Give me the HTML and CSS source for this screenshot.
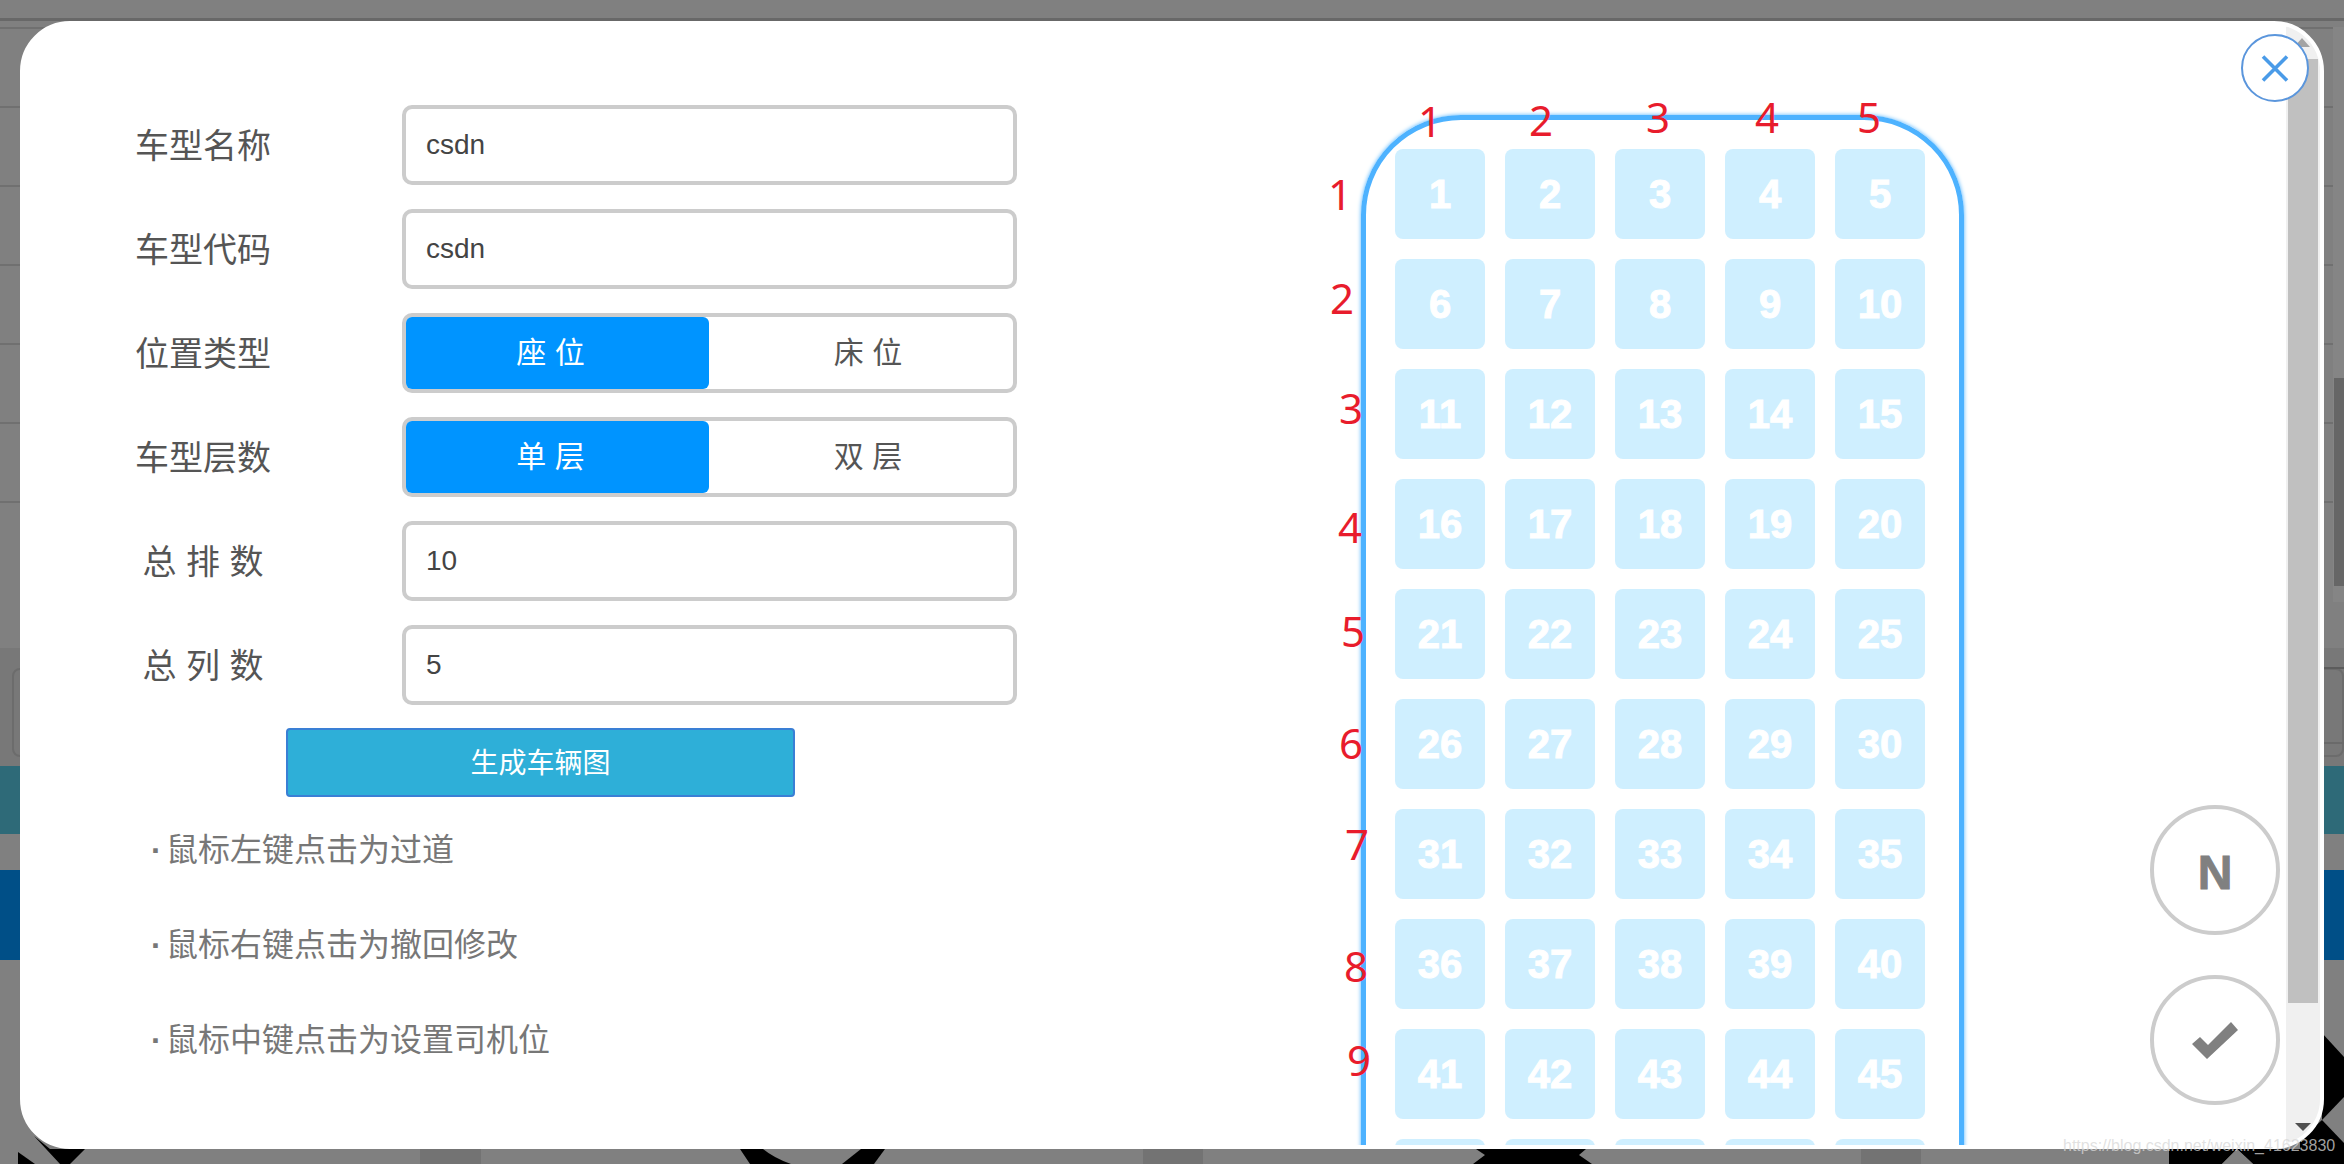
FILE: index.html
```html
<!DOCTYPE html>
<html>
<head>
<title>车型设置</title>
<link rel="stylesheet" href="styles.css">
</head>
<body>

<!-- page behind the dialog -->
<div class="page">
    <div class="top-bar"></div>
    <div class="top-row"></div>
    <div class="table-row"></div>
    <div class="table-row"></div>
    <div class="table-row"></div>
    <div class="table-row"></div>
    <div class="table-row"></div>
    <div class="table-row"></div>
    <div class="page-gap"></div>
    <div class="filter-bar"><div class="filter-input"></div></div>
    <div class="teal-band"></div>
    <div class="blue-band"></div>

    <svg class="page-shapes" width="2344" height="1164" viewBox="0 0 2344 1164">
        <rect x="2333" y="27" width="11" height="575" fill="#858585"/>
        <rect x="2334" y="378" width="10" height="208" fill="#666666"/>
        <rect x="2324" y="667" width="20" height="2" fill="#5c5c5c"/>
        <rect x="2324" y="742" width="20" height="2" fill="#6a6a6a"/>
        <rect x="420" y="1149" width="61" height="15" fill="#737373"/>
        <rect x="1143" y="1149" width="60" height="15" fill="#737373"/>
        <rect x="1861" y="1149" width="60" height="15" fill="#737373"/>
        <polygon points="18,1152 35,1164 18,1164" fill="#000"/>
        <polygon points="34,1136 60,1164 70,1164 85,1149 50,1149" fill="#000"/>
        <path d="M740 1149 L763 1149 Q774 1158 791 1164 L750 1164Z" fill="#000"/>
        <path d="M861 1149 L885 1149 L874 1164 L842 1164Z" fill="#000"/>
        <polygon points="1476,1149 1586,1149 1579,1155 1592,1164 1473,1164 1485,1155" fill="#000"/>
        <polygon points="2169,1149 2237,1149 2222,1164 2169,1164" fill="#000"/>
        <polygon points="2237,1149 2344,1149 2344,1164 2253,1164" fill="#000"/>
        <polygon points="2237,1149 2253,1164 2222,1164" fill="#808080"/>
        <polygon points="2322,1033 2344,1057 2344,1097 2322,1120" fill="#000"/>
        <polygon points="2322,1120 2344,1143 2344,1164 2300,1164 2300,1140" fill="#000"/>
    </svg>
</div>

<!-- dialog -->
<div class="modal">
    <div class="modal-body">

        <div class="form-col">
            <div class="form-row">
                <label class="form-label">车型名称</label>
                <div class="text-box">csdn</div>
            </div>
            <div class="form-row">
                <label class="form-label">车型代码</label>
                <div class="text-box">csdn</div>
            </div>
            <div class="form-row">
                <label class="form-label">位置类型</label>
                <div class="switch">
                    <div class="switch-item switch-on">座 位</div>
                    <div class="switch-item">床 位</div>
                </div>
            </div>
            <div class="form-row">
                <label class="form-label">车型层数</label>
                <div class="switch">
                    <div class="switch-item switch-on">单 层</div>
                    <div class="switch-item">双 层</div>
                </div>
            </div>
            <div class="form-row">
                <label class="form-label">总 排 数</label>
                <div class="text-box">10</div>
            </div>
            <div class="form-row">
                <label class="form-label">总 列 数</label>
                <div class="text-box">5</div>
            </div>

            <button class="make-button">生成车辆图</button>

            <ul class="hints">
                <li>鼠标左键点击为过道</li>
                <li>鼠标右键点击为撤回修改</li>
                <li>鼠标中键点击为设置司机位</li>
            </ul>
        </div>

        <div class="bus">
            <div class="seat">1</div><div class="seat">2</div><div class="seat">3</div><div class="seat">4</div><div class="seat">5</div>
            <div class="seat">6</div><div class="seat">7</div><div class="seat">8</div><div class="seat">9</div><div class="seat">10</div>
            <div class="seat">11</div><div class="seat">12</div><div class="seat">13</div><div class="seat">14</div><div class="seat">15</div>
            <div class="seat">16</div><div class="seat">17</div><div class="seat">18</div><div class="seat">19</div><div class="seat">20</div>
            <div class="seat">21</div><div class="seat">22</div><div class="seat">23</div><div class="seat">24</div><div class="seat">25</div>
            <div class="seat">26</div><div class="seat">27</div><div class="seat">28</div><div class="seat">29</div><div class="seat">30</div>
            <div class="seat">31</div><div class="seat">32</div><div class="seat">33</div><div class="seat">34</div><div class="seat">35</div>
            <div class="seat">36</div><div class="seat">37</div><div class="seat">38</div><div class="seat">39</div><div class="seat">40</div>
            <div class="seat">41</div><div class="seat">42</div><div class="seat">43</div><div class="seat">44</div><div class="seat">45</div>
            <!-- last row, only its top edge shows -->
            <div class="seat"></div><div class="seat"></div><div class="seat"></div><div class="seat"></div><div class="seat"></div>
        </div>
    </div>

    <!-- red numbers written over the screenshot -->
    <span class="mark col-1">1</span>
    <span class="mark col-2">2</span>
    <span class="mark col-3">3</span>
    <span class="mark col-4">4</span>
    <span class="mark col-5">5</span>
    <span class="mark row-1">1</span>
    <span class="mark row-2">2</span>
    <span class="mark row-3">3</span>
    <span class="mark row-4">4</span>
    <span class="mark row-5">5</span>
    <span class="mark row-6">6</span>
    <span class="mark row-7">7</span>
    <span class="mark row-8">8</span>
    <span class="mark row-9">9</span>

    <!-- scrollbar -->
    <div class="scrollbar">
        <div class="scroll-up"></div>
        <div class="scroll-thumb"></div>
        <div class="scroll-down"></div>
    </div>

    <!-- floating buttons -->
    <div class="close-button">
        <svg width="28" height="27" viewBox="0 0 28 27">
            <path d="M2 1.5L26 25.5M26 1.5L2 25.5" stroke="#4a9be8" stroke-width="3.6" fill="none"/>
        </svg>
    </div>
    <div class="round-button next-button">N</div>
    <div class="round-button ok-button">
        <svg width="46" height="38" viewBox="0 0 46 38">
            <polygon points="0,22 8,15 16,23 39,0 46,8 15,37" fill="#808080"/>
        </svg>
    </div>
</div>

<div class="watermark">https://blog.csdn.net/weixin_41623830</div>

</body>
</html>
```

FILE: styles.css
```css
body {
    margin: 0;
    font-family: "Liberation Sans", "Noto Sans CJK SC", sans-serif;
    overflow: hidden;
}

/* page behind the dialog */
.page {
    position: relative;
    width: 2344px;
    height: 1164px;
    background-color: #808080;
    overflow: hidden;
}

.top-bar {
    height: 18px;
    border-bottom: 3px solid #686868;
}

.top-row {
    height: 6px;
    border-bottom: 2px solid #707070;
}

.table-row {
    height: 77px;
    border-bottom: 2px solid #707070;
}

.page-gap {
    height: 145px;
}

.filter-bar {
    height: 118px;
    padding: 20px 0 0 12px;
    box-sizing: border-box;
    background-color: #787878;
}

.filter-input {
    height: 85px;
    border: 2px solid #6c6c6c;
    border-radius: 8px;
}

.teal-band {
    height: 68px;
    margin-bottom: 36px;
    background-color: #2e6a78;
}

.blue-band {
    height: 90px;
    background-color: #004f87;
}

.page-shapes {
    position: absolute;
    left: 0;
    top: 0;
}

/* dialog */
.modal {
    position: absolute;
    left: 20px;
    top: 21px;
    width: 2304px;
    height: 1128px;
    box-sizing: border-box;
    border: 4px solid #ffffff;
    border-radius: 50px;
    background-color: #ffffff;
    overflow: hidden;
}

.modal-body {
    display: flex;
    align-items: flex-start;
}

.form-col {
    width: 1337px;
    flex-shrink: 0;
    box-sizing: border-box;
    padding: 80px 0 0 79px;
}

.form-row {
    display: flex;
    align-items: center;
    height: 80px;
    margin-bottom: 24px;
}

.form-label {
    width: 200px;
    margin-right: 99px;
    padding-bottom: 4px;
    font-size: 34px;
    color: #555555;
    text-align: center;
}

.text-box {
    width: 615px;
    height: 80px;
    box-sizing: border-box;
    padding-left: 20px;
    border: 4px solid #cccccc;
    border-radius: 10px;
    font-size: 28px;
    line-height: 72px;
    color: #444444;
}

.switch {
    display: flex;
    width: 615px;
    height: 80px;
    box-sizing: border-box;
    border: 4px solid #cccccc;
    border-radius: 10px;
}

.switch-item {
    flex: 1;
    padding-left: 14px;
    font-size: 30px;
    line-height: 72px;
    text-align: center;
    color: #555555;
}

.switch-on {
    flex: none;
    box-sizing: border-box;
    width: 303px;
    padding: 0 14px 0 0;
    background-color: #0094ff;
    border-radius: 6px;
    color: #ffffff;
}

.make-button {
    display: block;
    width: 509px;
    height: 69px;
    margin: -1px 0 0 183px;
    padding: 0 0 3px 0;
    border: 2px solid #3a7fd5;
    border-radius: 4px;
    background-color: #2eafd8;
    font-family: inherit;
    font-size: 28px;
    color: #ffffff;
}

.hints {
    list-style: none;
    margin: 6px 0 0 0;
    padding: 0 0 0 48px;
    font-size: 32px;
    line-height: 95px;
    color: #777777;
}

.hints li::before {
    content: "·";
    display: inline-block;
    width: 15px;
    font-family: "Liberation Sans", sans-serif;
    font-weight: bold;
}

/* bus plan */
.bus {
    display: grid;
    grid-template-columns: repeat(5, 90px);
    gap: 20px;
    width: 603px;
    flex-shrink: 0;
    box-sizing: border-box;
    margin-top: 90px;
    padding: 29px 0 29px 29px;
    border: 5px solid #4db2ff;
    border-radius: 100px;
    box-shadow: 0 0 4px #4db2ff;
}

.seat {
    height: 90px;
    border-radius: 8px;
    background-color: #cfefff;
    font-size: 40px;
    font-weight: bold;
    line-height: 90px;
    text-align: center;
    color: #ffffff;
    -webkit-text-stroke: 1px #ffffff;
}

/* red numbers */
.mark {
    position: absolute;
    width: 40px;
    font-family: "Noto Sans", sans-serif;
    font-size: 42px;
    line-height: 50px;
    text-align: center;
    color: #e81c2c;
}

.col-1 { left: 1386px; top: 71px; }
.col-2 { left: 1497px; top: 70px; }
.col-3 { left: 1614px; top: 67px; }
.col-4 { left: 1723px; top: 67px; }
.col-5 { left: 1825px; top: 67px; }
.row-1 { left: 1296px; top: 144px; }
.row-2 { left: 1298px; top: 248px; }
.row-3 { left: 1307px; top: 358px; }
.row-4 { left: 1306px; top: 477px; }
.row-5 { left: 1309px; top: 581px; }
.row-6 { left: 1307px; top: 693px; }
.row-7 { left: 1313px; top: 794px; }
.row-8 { left: 1312px; top: 916px; }
.row-9 { left: 1315px; top: 1010px; }

/* scrollbar */
.scrollbar {
    position: absolute;
    left: 2262px;
    top: 0;
    bottom: 0;
    width: 34px;
    background-color: #f0f0f0;
}

.scroll-up {
    position: absolute;
    left: 8px;
    top: 13px;
    border-left: 8px solid transparent;
    border-right: 8px solid transparent;
    border-bottom: 9px solid #a3a3a3;
}

.scroll-thumb {
    position: absolute;
    left: 2px;
    right: 2px;
    top: 34px;
    height: 944px;
    background-color: #c0c0c0;
}

.scroll-down {
    position: absolute;
    left: 9px;
    bottom: 14px;
    border-left: 8px solid transparent;
    border-right: 8px solid transparent;
    border-top: 8px solid #505050;
}

/* floating buttons */
.close-button, .round-button {
    position: absolute;
    display: flex;
    align-items: center;
    justify-content: center;
    box-sizing: border-box;
    border-radius: 50%;
    background-color: #ffffff;
}

.close-button {
    left: 2217px;
    top: 9px;
    width: 68px;
    height: 68px;
    border: 2px solid #5b96dc;
}

.round-button {
    left: 2126px;
    width: 130px;
    height: 130px;
    border: 4px solid #cccccc;
}

.next-button {
    top: 780px;
    padding-top: 4px;
    font-size: 48px;
    font-weight: bold;
    color: #808080;
    -webkit-text-stroke: 1px #808080;
}

.ok-button {
    top: 950px;
    padding-top: 2px;
}

.watermark {
    position: absolute;
    left: 2063px;
    top: 1134px;
    font-size: 16px;
    line-height: 24px;
    color: rgba(215, 215, 215, 0.75);
}
```
